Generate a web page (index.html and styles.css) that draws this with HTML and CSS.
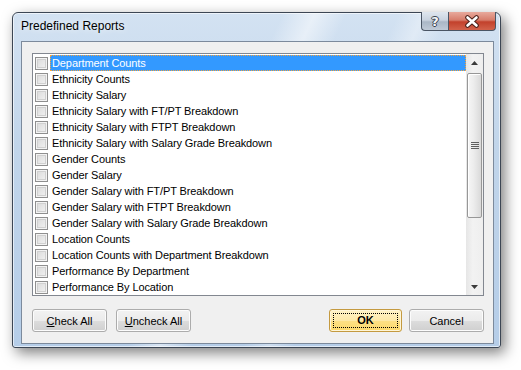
FILE: index.html
```html
<html>
<head>
    <link rel="stylesheet" href="styles.css">
</head>
<body>
    <div class="window">
        <div class="titlebar">
            <span class="title">Predefined Reports</span>
            <div class="caption-buttons">
                <div class="cap help">?</div>
                <div class="cap close">
                    <svg width="16" height="13" viewBox="0 0 16 13">
                        <path d="M3.5 2.5 L12.5 10.5 M12.5 2.5 L3.5 10.5" stroke="#4a2019" stroke-width="4.6" stroke-linecap="round"/>
                        <path d="M3.5 2.5 L12.5 10.5 M12.5 2.5 L3.5 10.5" stroke="#ffffff" stroke-width="2.6" stroke-linecap="round"/>
                    </svg>
                </div>
            </div>
        </div>
        <div class="client">
            <div class="listbox">
                <ul class="items">
                    <li class="item selected"><span class="check"></span><span class="label">Department Counts</span></li>
                    <li class="item"><span class="check"></span><span class="label">Ethnicity Counts</span></li>
                    <li class="item"><span class="check"></span><span class="label">Ethnicity Salary</span></li>
                    <li class="item"><span class="check"></span><span class="label">Ethnicity Salary with FT/PT Breakdown</span></li>
                    <li class="item"><span class="check"></span><span class="label">Ethnicity Salary with FTPT Breakdown</span></li>
                    <li class="item"><span class="check"></span><span class="label">Ethnicity Salary with Salary Grade Breakdown</span></li>
                    <li class="item"><span class="check"></span><span class="label">Gender Counts</span></li>
                    <li class="item"><span class="check"></span><span class="label">Gender Salary</span></li>
                    <li class="item"><span class="check"></span><span class="label">Gender Salary with FT/PT Breakdown</span></li>
                    <li class="item"><span class="check"></span><span class="label">Gender Salary with FTPT Breakdown</span></li>
                    <li class="item"><span class="check"></span><span class="label">Gender Salary with Salary Grade Breakdown</span></li>
                    <li class="item"><span class="check"></span><span class="label">Location Counts</span></li>
                    <li class="item"><span class="check"></span><span class="label">Location Counts with Department Breakdown</span></li>
                    <li class="item"><span class="check"></span><span class="label">Performance By Department</span></li>
                    <li class="item"><span class="check"></span><span class="label">Performance By Location</span></li>
                </ul>
                <div class="scrollbar">
                    <div class="sb-button">
                        <svg width="7" height="4" viewBox="0 0 7 4"><path d="M3.5 0 L7 4 L0 4 Z" fill="#3b3b3b"/></svg>
                    </div>
                    <div class="sb-track">
                        <div class="sb-thumb">
                            <svg width="8" height="8" viewBox="0 0 8 8">
                                <path d="M0 0.5 H8 M0 2.5 H8 M0 4.5 H8 M0 6.5 H8" stroke="#5f5f5f" stroke-width="1"/>
                            </svg>
                        </div>
                    </div>
                    <div class="sb-button">
                        <svg width="7" height="4" viewBox="0 0 7 4"><path d="M0 0 L7 0 L3.5 4 Z" fill="#3b3b3b"/></svg>
                    </div>
                </div>
            </div>
            <div class="actions">
                <button class="btn"><u>C</u>heck All</button>
                <button class="btn"><u>U</u>ncheck All</button>
                <span class="spacer"></span>
                <button class="btn default"><span class="focus">OK</span></button>
                <button class="btn">Cancel</button>
            </div>
        </div>
    </div>
</body>
</html>
```

FILE: styles.css
```css
body {
    margin: 0;
    width: 521px;
    height: 370px;
    background-color: #ffffff;
    font-family: "Liberation Sans", Arial, sans-serif;
    font-size: 11px;
    overflow: hidden;
}
.window {
    margin: 12px 0 0 12px;
    width: 489px;
    height: 336px;
    box-sizing: border-box;
    border: 1px solid #3c4654;
    border-radius: 6px 6px 3px 3px;
    background:
        linear-gradient(115deg, rgba(255,255,255,0) 42%, rgba(255,255,255,0.5) 47%, rgba(255,255,255,0) 52%, rgba(255,255,255,0) 60%, rgba(255,255,255,0.35) 64%, rgba(255,255,255,0) 68%),
        linear-gradient(to bottom, #d3e2f2 0%, #c1d5ea 40%, #b5cde8 100%);
    box-shadow: 4px 5px 14px rgba(0, 0, 0, 0.5), inset 0 0 0 1px rgba(255, 255, 255, 0.6);
    display: flex;
    flex-direction: column;
}
.titlebar {
    height: 28px;
    display: flex;
    align-items: flex-start;
    flex-shrink: 0;
}
.title {
    flex: 1;
    padding: 6px 0 0 8px;
    font-size: 12px;
    color: #000000;
    text-shadow: 0 0 6px rgba(255, 255, 255, 0.9);
}
.caption-buttons {
    display: flex;
    margin-top: -1px;
    margin-right: 4px;
}
.cap {
    height: 19px;
    box-sizing: border-box;
    border: 1px solid #4a5564;
    border-top: none;
    display: flex;
    align-items: center;
    justify-content: center;
}
.help {
    width: 27px;
    border-right: none;
    border-radius: 0 0 0 4px;
    background: linear-gradient(to bottom, #dfe6ee 0%, #c9d3df 45%, #aab7c6 55%, #bfcad7 100%);
    font-family: "DejaVu Sans", sans-serif;
    font-weight: bold;
    font-size: 13px;
    color: #f4f6f8;
    text-shadow: 1px 0 0 #3a4450, -1px 0 0 #3a4450, 0 1px 0 #3a4450, 0 -1px 0 #3a4450;
}
.close {
    width: 48px;
    border-radius: 0 0 4px 0;
    background: linear-gradient(to bottom, #e8a99c 0%, #d77d6b 45%, #c2412c 55%, #d2624b 100%);
}
.client {
    flex: 1;
    margin: 0 6px 3px 8px;
    border: 1px solid #7c8a9c;
    background-color: #f0f0f0;
    padding: 11px 9px 11px 10px;
    display: flex;
    flex-direction: column;
}
.listbox {
    height: 243px;
    box-sizing: border-box;
    border: 1px solid #828790;
    background-color: #ffffff;
    display: flex;
}
.items {
    flex: 1;
    list-style: none;
    margin: 0;
    padding: 1px 0 0 0;
    overflow: hidden;
}
.item {
    height: 16px;
    display: flex;
    align-items: center;
    color: #000000;
}
.check {
    width: 13px;
    height: 13px;
    box-sizing: border-box;
    margin-left: 2px;
    border: 1px solid #8f8f8f;
    background: linear-gradient(135deg, #d8d8d8 0%, #f4f4f4 100%);
    box-shadow: inset 0 0 0 1px #f3f3f3, inset 0 0 0 2px #d0d0d0;
}
.label {
    flex: 1;
    height: 16px;
    line-height: 16px;
    margin-left: 2px;
    padding-left: 2px;
    box-sizing: border-box;
    white-space: nowrap;
    letter-spacing: -0.1px;
}
.selected .label {
    background-color: #3399ff;
    color: #ffffff;
    outline: 1px dotted #f6a33c;
    outline-offset: -1px;
}
.scrollbar {
    width: 17px;
    background: linear-gradient(to right, #e6e6e6, #f2f2f2 40%, #eeeeee);
    display: flex;
    flex-direction: column;
}
.sb-button {
    height: 17px;
    display: flex;
    align-items: center;
    justify-content: center;
}
.sb-track {
    flex: 1;
}
.sb-thumb {
    margin: 2px 1px 0 1px;
    height: 145px;
    box-sizing: border-box;
    border: 1px solid #979797;
    border-radius: 2px;
    background: linear-gradient(to right, #f6f6f6 0%, #ececec 45%, #d9d9d9 100%);
    box-shadow: inset 1px 1px 0 #ffffff;
    display: flex;
    align-items: center;
    justify-content: center;
}
.actions {
    margin-top: 13px;
    display: flex;
    gap: 9px;
}
.spacer {
    flex: 1;
}
.btn {
    width: 75px;
    height: 23px;
    margin: 0;
    padding: 0;
    border: 1px solid #acacac;
    border-radius: 3px;
    background: linear-gradient(to bottom, #f2f2f2 0%, #ebebeb 50%, #dddddd 51%, #cfcfcf 100%);
    box-shadow: inset 0 0 0 1px #fcfcfc;
    font-family: "Liberation Sans", Arial, sans-serif;
    font-size: 11px;
    color: #000000;
}
.btn.default {
    width: 73px;
    margin-right: -2px;
    border-color: #c49a40;
    background: linear-gradient(to bottom, #fff3c8 0%, #fde9a8 50%, #fde085 51%, #fdd96b 100%);
    box-shadow: inset 0 0 0 1px #fff6d8;
    font-weight: bold;
    display: flex;
    align-items: center;
    justify-content: center;
}
.focus {
    display: block;
    width: 65px;
    height: 15px;
    line-height: 13px;
    box-sizing: border-box;
    border: 1px dotted #000000;
}
```
